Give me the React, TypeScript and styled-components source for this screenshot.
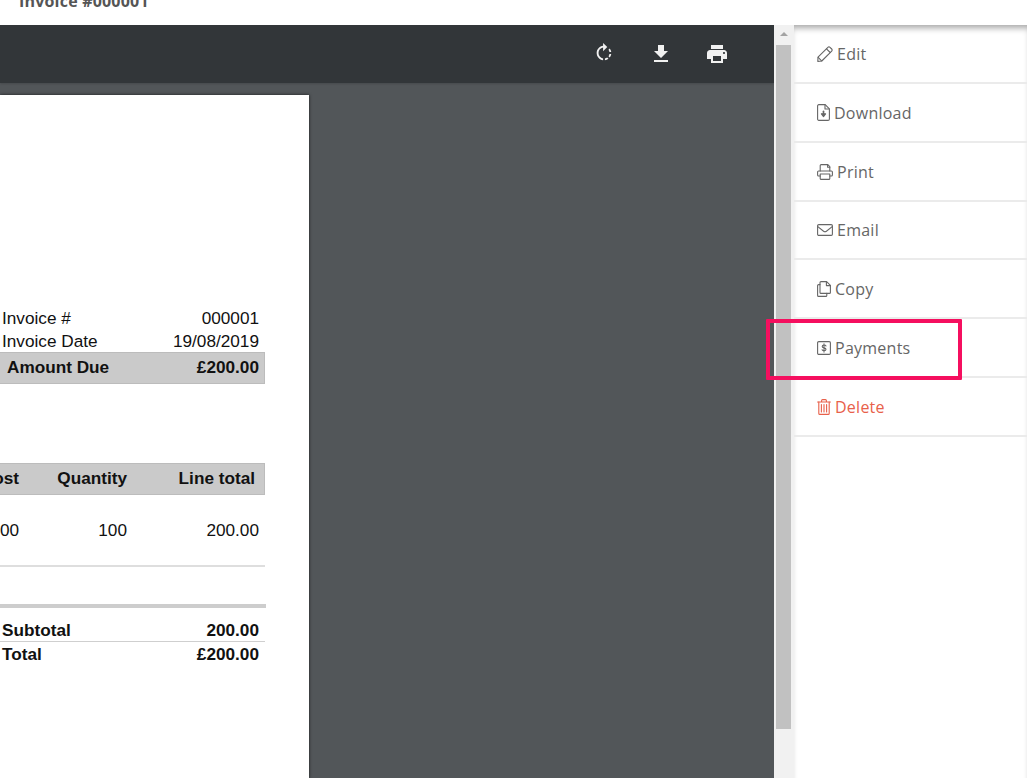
import React, { ReactElement } from 'react';
import styled, { createGlobalStyle } from 'styled-components';
import { MdFileDownload, MdPrint, MdRotateRight } from 'react-icons/md';

const GlobalStyle = createGlobalStyle`
  html, body {
    margin: 0;
    height: 100%;
    overflow: hidden;
    background: #fff;
  }
`;

const Page = styled.div`
  position: relative;
  display: flex;
  flex-direction: column;
  height: 778px;
  overflow: hidden;
  font-family: 'Open Sans', sans-serif;
`;

const TopBar = styled.header`
  flex: 0 0 25px;
  overflow: hidden;
  padding-left: 19px;
`;

const PageTitle = styled.h1`
  margin: -8px 0 0;
  font-size: 16px;
  line-height: 18px;
  font-weight: 700;
  letter-spacing: 0.2px;
  color: #555;
`;

const Body = styled.div`
  flex: 1;
  display: flex;
  min-height: 0;
`;

const Viewer = styled.main`
  flex: 0 0 774px;
  display: flex;
  flex-direction: column;
  background: #525659;
  overflow: hidden;
`;

const ViewerToolbar = styled.div`
  flex: 0 0 58px;
  display: flex;
  align-items: center;
  justify-content: flex-end;
  padding-right: 29px;
  background: #323639;
  box-shadow: 0 1px 2px rgba(0, 0, 0, 0.15);
`;

const ToolButton = styled.button<{ $rotate?: boolean }>`
  width: ${p => (p.$rotate ? '58px' : '56px')};
  height: 24px;
  display: flex;
  align-items: center;
  justify-content: center;
  padding: 0 0 ${p => (p.$rotate ? '2px' : '0')};
  border: 0;
  background: none;
  color: #f1f1f1;
`;

const Paper = styled.div`
  width: 265px;
  flex: 1;
  margin-top: 12px;
  padding: 211px 44px 0 0;
  background: #fff;
  box-shadow: 0 0 3px rgba(0, 0, 0, 0.7);
  color: #111;
  font-family: 'Liberation Sans', Arial, sans-serif;
  font-size: 17.2px;
`;

const MetaRow = styled.div`
  display: flex;
  justify-content: space-between;
  height: 23px;
  line-height: 25px;
  padding: 0 6px 0 2px;
`;

const AmountDue = styled.div`
  box-sizing: border-box;
  display: flex;
  justify-content: space-between;
  align-items: center;
  height: 32px;
  padding: 0 5px 1px 7px;
  background: #cacaca;
  border: 1px solid #bcbcbc;
  border-left: 0;
  font-weight: 700;
`;

const ItemsHeader = styled.div`
  box-sizing: border-box;
  display: grid;
  grid-template-columns: 19px 108px 128px;
  align-items: center;
  height: 32px;
  margin-top: 79px;
  padding-bottom: 1px;
  background: #cacaca;
  border: 1px solid #bcbcbc;
  border-left: 0;
  font-weight: 700;
`;

const ItemRow = styled.div`
  box-sizing: border-box;
  display: grid;
  grid-template-columns: 19px 108px 132px;
  align-items: center;
  height: 72px;
  border-bottom: 2px solid #dedede;
`;

const Cell = styled.span`
  display: flex;
  justify-content: flex-end;
  white-space: nowrap;
`;

const ThickRule = styled.div`
  width: 266px;
  height: 4px;
  margin-top: 37px;
  background: #cdcdcd;
`;

const TotalRow = styled.div<{ $ruled?: boolean }>`
  box-sizing: border-box;
  display: flex;
  justify-content: space-between;
  align-items: center;
  height: 23px;
  padding: ${p => (p.$ruled ? '1px' : '2px')} 6px 0 2px;
  font-weight: 700;
  margin-top: ${p => (p.$ruled ? '11px' : '0')};
  border-bottom: ${p => (p.$ruled ? '1px solid #cfcfcf' : '0')};
`;

const Scrollbar = styled.div`
  flex: 0 0 20px;
  display: flex;
  flex-direction: column;
  align-items: center;
  background: #f1f1f1;
`;

const ScrollArrow = styled.span`
  width: 0;
  height: 0;
  margin: 7px 0 9px;
  border-left: 4px solid transparent;
  border-right: 4px solid transparent;
  border-bottom: 4px solid #a3a3a3;
`;

const ScrollThumb = styled.div`
  width: 15px;
  height: 684px;
  margin-right: 1px;
  background: #c1c1c1;
`;

const Sidebar = styled.nav`
  flex: 1;
  display: flex;
  flex-direction: column;
  box-shadow: inset 0 6px 6px -3px rgba(0, 0, 0, 0.35);
`;

const ActionRow = styled.a<{ $danger?: boolean }>`
  box-sizing: border-box;
  display: flex;
  align-items: center;
  gap: 4px;
  height: 58.85px;
  padding: 1px 0 0 23px;
  border-bottom: 2px solid #ebebeb;
  font-size: 16px;
  letter-spacing: 0.25px;
  color: ${p => (p.$danger ? '#e8604a' : '#666')};
`;

const ActionIcon = styled.svg`
  display: block;
  flex: none;
  fill: none;
  stroke: currentColor;
  stroke-width: 1.1;
  stroke-linejoin: round;
  stroke-linecap: round;
`;

const Highlight = styled.div`
  position: absolute;
  left: 766px;
  top: 319px;
  box-sizing: border-box;
  width: 196px;
  height: 61px;
  border: 4px solid #f50f5f;
  border-radius: 1px;
  pointer-events: none;
`;

const actions = [
  {
    label: 'Edit',
    icon: (
      <ActionIcon width="16" height="16" viewBox="0 0 16 16">
        <path d="M1 11.2 10.9 1.3c.6-.6 1.5-.6 2.1 0l1.7 1.7c.6.6.6 1.5 0 2.1L4.8 15 .8 15.4z" />
        <path d="M9.5 2.8l3.7 3.7M1.2 11.4l3.4 3.4" />
      </ActionIcon>
    ),
  },
  {
    label: 'Download',
    icon: (
      <ActionIcon width="13" height="17" viewBox="0 0 13 17">
        <path d="M1.8.6h6.4l4.2 4.2v10.2c0 .8-.6 1.4-1.4 1.4H1.8c-.7 0-1.2-.6-1.2-1.4V2c0-.8.5-1.4 1.2-1.4z" />
        <path d="M8 .8v4.2h4.2" />
        <path d="M4.4 9.8h4.2L6.5 12.6z" fill="currentColor" />
        <path d="M6.5 7.2v3" strokeWidth="1.6" />
      </ActionIcon>
    ),
  },
  {
    label: 'Print',
    icon: (
      <ActionIcon width="16" height="16" viewBox="0 0 16 16">
        <path d="M3.2 7V1.6c0-.5.4-1 1-1h6.6L12.8 2.6V7" />
        <path d="M3.2 12H1.6c-.6 0-1-.4-1-1V8c0-.6.4-1 1-1h12.8c.6 0 1 .4 1 1v3c0 .6-.4 1-1 1h-1.6" />
        <path d="M3.2 10h9.6v4.4c0 .5-.4 1-1 1H4.2c-.6 0-1-.5-1-1z" />
        <path d="M10.6.8v2.4h2.2" />
      </ActionIcon>
    ),
  },
  {
    label: 'Email',
    icon: (
      <ActionIcon width="16" height="12" viewBox="0 0 16 12">
        <rect x="0.6" y="0.6" width="14.8" height="10.8" rx="1.2" />
        <path d="M.8 2.6 6.6 7.2c.8.6 2 .6 2.8 0L15.2 2.6" />
      </ActionIcon>
    ),
  },
  {
    label: 'Copy',
    icon: (
      <ActionIcon width="14" height="16" viewBox="0 0 14 16">
        <path d="M4 .6h5.6l3.8 3.8v7c0 .6-.4 1-1 1H4c-.6 0-1-.4-1-1V1.6c0-.6.4-1 1-1z" />
        <path d="M9.4.8v3.8h3.8" />
        <path d="M3 3.6H1.6c-.6 0-1 .4-1 1v9.8c0 .6.4 1 1 1h7.2c.6 0 1-.4 1-1v-2" />
      </ActionIcon>
    ),
  },
  {
    label: 'Payments',
    icon: (
      <ActionIcon width="14" height="14" viewBox="0 0 14 14">
        <rect x="0.6" y="0.6" width="12.8" height="12.8" rx="1.2" />
        <path d="M9 4.9c-.3-.6-1-.9-1.9-.9-1.1 0-1.9.5-1.9 1.4 0 1.9 3.8 1 3.8 2.9 0 .9-.8 1.5-1.9 1.5-.9 0-1.7-.4-2-1M7 2.9v8.2" />
      </ActionIcon>
    ),
  },
  {
    label: 'Delete',
    danger: true,
    icon: (
      <ActionIcon width="14" height="16" viewBox="0 0 14 16">
        <path d="M.6 3h12.8M4.6 3V1.6c0-.5.4-1 1-1h2.8c.6 0 1 .5 1 1V3" />
        <path d="M1.8 3v11.4c0 .6.4 1 1 1h8.4c.6 0 1-.4 1-1V3" />
        <path d="M4.4 5.6v7.4M7 5.6v7.4M9.6 5.6v7.4" />
      </ActionIcon>
    ),
  },
];

export default function App(): ReactElement {
  return (
    <Page>
      <GlobalStyle />
      <TopBar>
        <PageTitle>Invoice #000001</PageTitle>
      </TopBar>
      <Body>
        <Viewer>
          <ViewerToolbar>
            <ToolButton $rotate aria-label="Rotate">
              <MdRotateRight size={22} />
            </ToolButton>
            <ToolButton aria-label="Download">
              <MdFileDownload size={24} />
            </ToolButton>
            <ToolButton aria-label="Print">
              <MdPrint size={24} />
            </ToolButton>
          </ViewerToolbar>
          <Paper>
            <MetaRow>
              <span>Invoice #</span>
              <span>000001</span>
            </MetaRow>
            <MetaRow>
              <span>Invoice Date</span>
              <span>19/08/2019</span>
            </MetaRow>
            <AmountDue>
              <span>Amount Due</span>
              <span>£200.00</span>
            </AmountDue>
            <ItemsHeader>
              <Cell>Unit cost</Cell>
              <Cell>Quantity</Cell>
              <Cell>Line total</Cell>
            </ItemsHeader>
            <ItemRow>
              <Cell>2.00</Cell>
              <Cell>100</Cell>
              <Cell>200.00</Cell>
            </ItemRow>
            <ThickRule />
            <TotalRow $ruled>
              <span>Subtotal</span>
              <span>200.00</span>
            </TotalRow>
            <TotalRow>
              <span>Total</span>
              <span>£200.00</span>
            </TotalRow>
          </Paper>
        </Viewer>
        <Scrollbar>
          <ScrollArrow />
          <ScrollThumb />
        </Scrollbar>
        <Sidebar>
          {actions.map(a => (
            <ActionRow key={a.label} $danger={a.danger}>
              {a.icon}
              {a.label}
            </ActionRow>
          ))}
        </Sidebar>
      </Body>
      <Highlight />
    </Page>
  );
}
